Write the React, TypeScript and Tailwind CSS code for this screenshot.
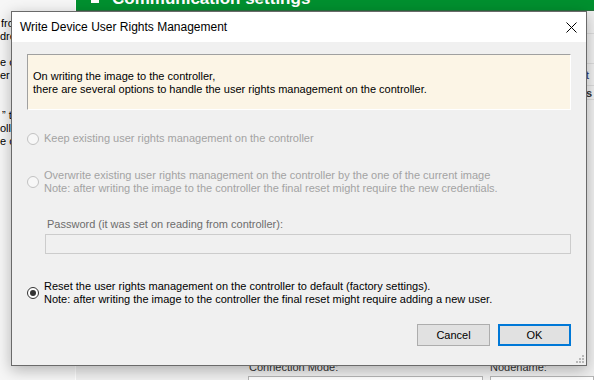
import React from "react";

const sans = "font-['Liberation_Sans',Arial,sans-serif]";

function Radio({ checked, disabled }: { checked?: boolean; disabled?: boolean }) {
  return (
    <div
      className={`w-[12px] h-[12px] rounded-full border flex items-center justify-center shrink-0 ${
        disabled ? "border-[#c2c2c2] bg-[#f7f7f7]" : "border-[#333333] bg-white"
      }`}
    >
      {checked && <div className="w-[6px] h-[6px] rounded-full bg-[#333333]" />}
    </div>
  );
}

function Option({
  lines,
  checked,
  disabled,
}: {
  lines: string[];
  checked?: boolean;
  disabled?: boolean;
}) {
  return (
    <div className="flex items-center gap-[5px]">
      <Radio checked={checked} disabled={disabled} />
      <div className={`text-[11px] leading-[13px] ${disabled ? "text-[#a3a3a3]" : "text-black"}`}>
        {lines.map((l) => (
          <div key={l} className="whitespace-nowrap">
            {l}
          </div>
        ))}
      </div>
    </div>
  );
}

function Grip() {
  const dots = [
    [6, 0],
    [3, 3],
    [6, 3],
    [0, 6],
    [3, 6],
    [6, 6],
  ];
  return (
    <svg width="9" height="9" viewBox="0 0 9 9">
      {dots.map(([x, y]) => (
        <rect key={`${x}-${y}`} x={x} y={y} width="2" height="2" fill="#b8b8b8" />
      ))}
    </svg>
  );
}

export default function App() {
  return (
    <div className={`relative w-[594px] h-[380px] overflow-hidden bg-[#f0f0f0] ${sans}`}>
      {/* background application */}
      <div className="flex h-full">
        {/* left pane */}
        <div className="w-[76px] h-full bg-[#f6f6f6] border-r border-white text-[11px] leading-[13px] text-black pt-[17px] overflow-hidden">
          <div className="whitespace-nowrap pl-[1px]">from the controller</div>
          <div className="whitespace-nowrap">dress</div>
          <div className="whitespace-nowrap mt-[13px]">e controller</div>
          <div className="whitespace-nowrap">er image</div>
          <div className="whitespace-nowrap mt-[27px] pl-[2px]">” to</div>
          <div className="whitespace-nowrap">oller</div>
          <div className="whitespace-nowrap">e con</div>
        </div>
        {/* main area */}
        <div className="flex-1 flex flex-col">
          <div className="h-[11px] bg-[#00902f] border-b border-[#2b6e3e] overflow-hidden shrink-0">
            <div className="flex items-center gap-[8px] pl-[15px] mt-[-10px] text-[17px] leading-[17px] font-bold text-white whitespace-nowrap">
              <div className="w-[8px] h-[8px] bg-white mt-[1px]" />
              <span className="ml-[5px]">Communication settings</span>
            </div>
          </div>
          <div className="flex-1 flex flex-col">
            <div className="flex justify-end">
              <div className="w-[10px] mt-[22px] border-t border-[#dcdcdc] h-[30px]" />
            </div>
            <div className="flex justify-end">
              <div className="w-[8px] h-[22px] border-t border-[#dcdcdc] text-[11px] leading-[22px] text-[#1a3a7a]">t</div>
            </div>
            <div className="flex justify-end">
              <div className="w-[8px] h-[15px] border-t border-b border-[#dcdcdc] text-[11px] font-bold leading-[14px] text-[#333]">s</div>
            </div>
            <div className="flex-1" />
            <div className="flex text-[11px] leading-[13px] text-[#333] pl-[172px] gap-[7px] mb-[-16px] shrink-0">
              <div className="w-[235px]">
                <div className="pl-[1px]">Connection Mode:</div>
                <div className="mt-[2px] h-[20px] border border-[#b5b5b5] bg-white" />
              </div>
              <div className="flex-1">
                <div>Nodename:</div>
                <div className="mt-[2px] h-[20px] border border-[#b5b5b5] bg-white pl-[3px] pt-[1px] text-[11px] leading-[13px] text-[#555] whitespace-nowrap overflow-hidden">
                  TM241CE24T_U_C
                </div>
              </div>
            </div>
          </div>
        </div>
      </div>

      {/* dialog window */}
      <div className="absolute left-[11px] top-[11px] w-[576px] h-[355px] border border-[#6a6a6a] bg-[#f0f0f0] shadow-[0_4px_14px_rgba(0,0,0,0.28)] flex flex-col">
        {/* title bar */}
        <div className="h-[30px] bg-white flex items-center justify-between pl-[8px] pr-[9px] shrink-0">
          <span className="text-[12px] text-black">Write Device User Rights Management</span>
          <svg width="11" height="11" viewBox="0 0 11 11">
            <path d="M0.5 0.5 L10.5 10.5 M10.5 0.5 L0.5 10.5" stroke="#000" strokeWidth="1" />
          </svg>
        </div>

        {/* body */}
        <div className="flex-1 flex flex-col pl-[15px] relative">
          <div className="mt-[12px] w-[544px] h-[56px] bg-[#fcf5e6] border-t border-l border-[#a0a0a0] border-b border-r border-b-white border-r-white pl-[5px] pt-[15px] text-[11px] leading-[13px] text-black">
            <div>On writing the image to the controller,</div>
            <div>there are several options to handle the user rights management on the controller.</div>
          </div>

          <div className="mt-[22px]">
            <Option disabled lines={["Keep existing user rights management on the controller"]} />
          </div>

          <div className="mt-[24px]">
            <Option
              disabled
              lines={[
                "Overwrite existing user rights management on the controller by the one of the current image",
                "Note: after writing the image to the controller the final reset might require the new credentials.",
              ]}
            />
          </div>

          <div className="mt-[23px] pl-[20px] text-[11px] leading-[13px] text-[#6d6d6d]">
            Password (it was set on reading from controller):
          </div>
          <div className="mt-[3px] ml-[18px] w-[526px] h-[20px] border border-[#cccccc] bg-[#f0f0f0]" />

          <div className="mt-[26px]">
            <Option
              checked
              lines={[
                "Reset the user rights management on the controller to default (factory settings).",
                "Note: after writing the image to the controller the final reset might require adding a new user.",
              ]}
            />
          </div>

          <div className="mt-[18px] w-[544px] flex justify-end gap-[8px]">
            <button className="w-[73px] h-[22px] bg-[#e1e1e1] border border-[#adadad] text-[11px] text-black">
              Cancel
            </button>
            <button className="w-[73px] h-[22px] bg-[#e1e1e1] border-2 border-[#0078d7] text-[11px] text-black">
              OK
            </button>
          </div>

          <div className="absolute right-[1px] bottom-[1px]">
            <Grip />
          </div>
        </div>
      </div>
    </div>
  );
}
